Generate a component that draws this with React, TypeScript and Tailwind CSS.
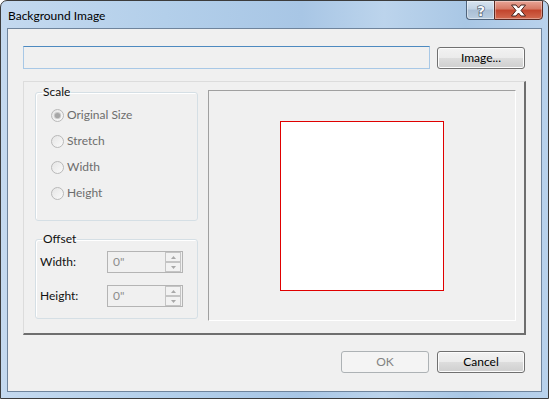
import React from 'react'

const FONT = { fontFamily: 'Lato, "Noto Sans", "Segoe UI", sans-serif' }

function Radio({ checked }: { checked?: boolean }) {
  return (
    <svg width="13" height="13" viewBox="0 0 13 13" className="shrink-0">
      <defs>
        <linearGradient id={checked ? 'rg1' : 'rg0'} x1="0" y1="0" x2="1" y2="1">
          <stop offset="0" stopColor="#e4e4e4" />
          <stop offset="1" stopColor="#fbfbfb" />
        </linearGradient>
      </defs>
      <circle cx="6.5" cy="6.5" r="6" fill={`url(#${checked ? 'rg1' : 'rg0'})`} stroke="#b8b8b8" />
      {checked && (
        <>
          <circle cx="6.5" cy="6.5" r="3.6" fill="#c9c9c9" />
          <circle cx="6.5" cy="6.5" r="2.6" fill="#a6a6a6" />
        </>
      )}
    </svg>
  )
}

function SpinBox() {
  return (
    <div className="w-[76px] h-[22px] border border-[#b4b4b4] bg-[#f0f0f0] flex items-center justify-between pl-[5px] pr-px">
      <span className="text-[12px] text-[#8d8d8d]">0"</span>
      <div className="flex flex-col gap-0 h-[20px]">
        <div className="w-[16px] h-[10px] border border-[#c4c4c4] bg-[#f2f2f2] flex items-center justify-center">
          <svg width="5" height="3" viewBox="0 0 5 3"><path d="M0 3 L2.5 0 L5 3 Z" fill="#a8a8a8" /></svg>
        </div>
        <div className="w-[16px] h-[10px] border border-[#c4c4c4] bg-[#f2f2f2] flex items-center justify-center">
          <svg width="5" height="3" viewBox="0 0 5 3"><path d="M0 0 L2.5 3 L5 0 Z" fill="#a8a8a8" /></svg>
        </div>
      </div>
    </div>
  )
}

function Button({ label, disabled }: { label: string; disabled?: boolean }) {
  return (
    <button
      className={
        disabled
          ? 'w-[88px] h-[22px] rounded-[3px] border border-[#adb2b5] bg-[#f4f4f4] text-[12px] text-[#838383] leading-none'
          : 'w-[88px] h-[22px] rounded-[3px] border border-[#707070] bg-[linear-gradient(#f2f2f2_0%,#ebebeb_50%,#dddddd_50%,#cfcfcf_100%)] text-[12px] text-black leading-none shadow-[inset_0_0_0_1px_#fcfcfc]'
      }
      style={FONT}
    >
      {label}
    </button>
  )
}

export default function App() {
  return (
    <div
      className="w-[549px] h-[399px] flex flex-col rounded-t-[7px] border border-[#3c3c3c] bg-[linear-gradient(90deg,#c4d9ef_0%,#b3cfea_30%,#a8c6e5_55%,#bcd4ec_70%,#a9c7e5_85%,#b9d2ec_100%)] overflow-hidden"
      style={FONT}
    >
      {/* Title bar */}
      <div className="h-[27px] flex justify-between items-start pl-[7px] pr-[5px]">
        <span className="text-[12px] text-black leading-none mt-[9px]">Background Image</span>
        <div className="flex -mt-px">
          <div className="w-[28px] h-[20px] rounded-bl-[4px] border border-[#4f647c] border-r-0 bg-[linear-gradient(#d8e4f0_0%,#c2d3e4_45%,#a9bed4_50%,#b9cde0_100%)] flex items-center justify-center shadow-[inset_0_0_0_1px_rgba(255,255,255,0.45)]">
            <svg width="12" height="15" viewBox="0 0 12 15">
              <text
                x="6"
                y="12.5"
                textAnchor="middle"
                fontSize="14"
                fontWeight="bold"
                fontFamily="DejaVu Sans, sans-serif"
                fill="#f6f8fa"
                stroke="#3a4b60"
                strokeWidth="1.2"
                paintOrder="stroke"
              >
                ?
              </text>
            </svg>
          </div>
          <div className="w-[49px] h-[20px] rounded-br-[4px] border border-[#5a2a23] bg-[linear-gradient(#e8a597_0%,#d57864_45%,#c2442c_50%,#d26a50_100%)] flex items-center justify-center shadow-[inset_0_0_0_1px_rgba(255,255,255,0.35)]">
            <svg width="17" height="13" viewBox="0 0 17 13">
              <path
                d="M1.5 1 H6 L8.5 4 L11 1 H15.5 L11 6.5 L15.5 12 H11 L8.5 9 L6 12 H1.5 L6 6.5 Z"
                fill="#ffffff"
                stroke="#47201a"
                strokeWidth="1"
                strokeLinejoin="round"
              />
            </svg>
          </div>
        </div>
      </div>

      {/* Client area */}
      <div className="flex-1 mx-[6px] mb-[6px] border border-[#6f849c] bg-[#f0f0f0] flex flex-col">
        <div className="mt-[17px] ml-[15px] mr-[16px] flex items-center gap-[7px]">
          <div className="flex-1 h-[23px] border border-[#a8c8e6] border-t-[#4d8ac0] bg-[#f0f0f0]" />
          <Button label="Image..." />
        </div>

        <div className="mt-[12px] mx-[15px] h-[254px] border-t border-l border-t-[#dcdcdc] border-l-[#dcdcdc] border-r-2 border-b-2 border-r-[#6e6e6e] border-b-[#6e6e6e] flex items-start pl-[11px] pt-[2px]">
          <div className="w-[163px] flex flex-col gap-[10px]">
            <fieldset className="h-[137px] border border-[#d5dfe5] rounded-[3px] shadow-[inset_1px_1px_0_#ffffff]">
              <legend className="ml-[6px] px-px text-[12px] leading-[16px] text-[#111]">Scale</legend>
              <div className="pt-[2px] pl-[15px] flex flex-col">
                {['Original Size', 'Stretch', 'Width', 'Height'].map((l, i) => (
                  <div key={l} className="h-[26px] flex items-center gap-[3px]">
                    <Radio checked={i === 0} />
                    <span className="text-[12px] text-[#6d6d6d]">{l}</span>
                  </div>
                ))}
              </div>
            </fieldset>
            <fieldset className="h-[88px] border border-[#d5dfe5] rounded-[3px] shadow-[inset_1px_1px_0_#ffffff]">
              <legend className="ml-[6px] px-px text-[12px] leading-[16px] text-[#111]">Offset</legend>
              <div className="pt-[4px] pl-[4px] flex flex-col gap-[12px]">
                {['Width:', 'Height:'].map(l => (
                  <div key={l} className="flex items-center">
                    <span className="w-[67px] text-[12px] text-[#111]">{l}</span>
                    <SpinBox />
                  </div>
                ))}
              </div>
            </fieldset>
          </div>

          <div className="ml-[10px] mt-[6px] w-[308px] h-[231px] border border-t-[#a0a0a0] border-l-[#a0a0a0] border-r-white border-b-white bg-[#f0f0f0] flex items-center justify-center">
            <div className="w-[164px] h-[170px] bg-white border border-[#e00000]" />
          </div>
        </div>

        <div className="mt-[16px] mr-[16px] flex justify-end gap-[8px]">
          <Button label="OK" disabled />
          <Button label="Cancel" />
        </div>
      </div>
    </div>
  )
}
